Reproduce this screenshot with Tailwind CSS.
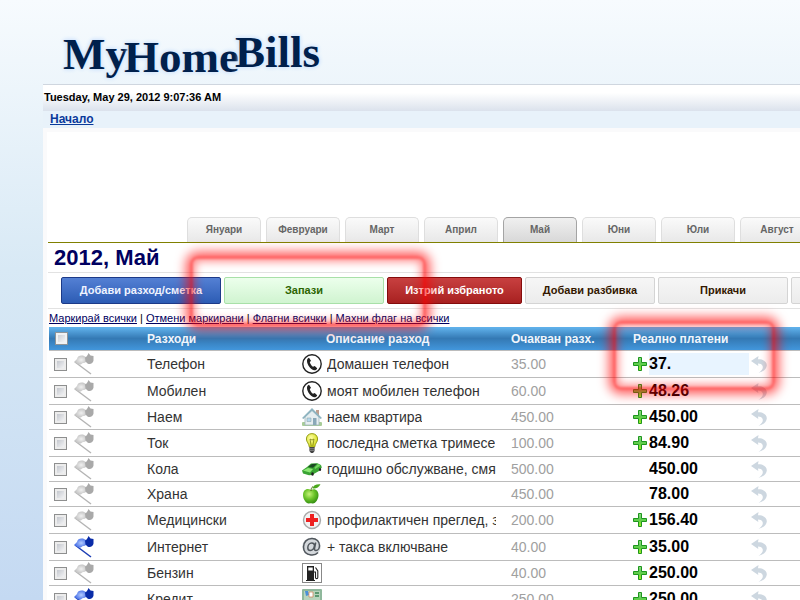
<!DOCTYPE html>
<html lang="bg">
<head>
<meta charset="utf-8">
<title>MyHomeBills</title>
<script src="https://cdn.jsdelivr.net/npm/@tailwindcss/browser@4"></script>
</head>
<body class="h-screen overflow-hidden bg-linear-to-b from-[#f7fbfe] via-[#d8e9f5] via-45% to-[#c4d9f2] font-['Liberation_Sans',Arial,sans-serif] text-black">
<svg class="absolute size-0" aria-hidden="true">
  <defs>
    <radialGradient id="gflag" cx=".6" cy=".5" r=".6"><stop offset="0" stop-color="#f0f0f0"/><stop offset="1" stop-color="#bcbcbc"/></radialGradient>
    <radialGradient id="bflag" cx=".6" cy=".5" r=".6"><stop offset="0" stop-color="#b4ccff"/><stop offset="1" stop-color="#3c66e4"/></radialGradient>
    <linearGradient id="gplus" x1="0" y1="0" x2="0" y2="1"><stop offset="0" stop-color="#8fd88a"/><stop offset=".5" stop-color="#5ccc4c"/><stop offset="1" stop-color="#a6ee1c"/></linearGradient>
    <radialGradient id="gapple" cx=".4" cy=".35" r=".7"><stop offset="0" stop-color="#c6f27a"/><stop offset=".5" stop-color="#6cc42a"/><stop offset="1" stop-color="#2f8a10"/></radialGradient>
    <radialGradient id="gbulb" cx=".4" cy=".35" r=".7"><stop offset="0" stop-color="#ffffa8"/><stop offset="1" stop-color="#d2dc10"/></radialGradient>
    <symbol id="flag-g" viewBox="0 0 20 22"><path d="M1 9 17 21" stroke="#b4b4b4" stroke-width="1.4" fill="none"/><path d="M0 9 3 6C3.500 3 6 2 9 2.500L12 4v5C10.500 10.500 8.500 9.500 7.500 11 6 12.500 3 11 0 9Z" fill="url(#gflag)"/><path d="M11 4.500C12.500 4 13.500 2.500 14.500 0L16.500 2.500 19.500 3V7.500C19 10.500 16 12 13.500 10.500L11.500 8.500Z" fill="#a9a9a9"/></symbol>
    <symbol id="flag-b" viewBox="0 0 20 22"><path d="M1 9 17 21" stroke="#1a3cb4" stroke-width="1.5" fill="none"/><path d="M0 9 3 6C3.500 3 6 2 9 2.500L12 4v5C10.500 10.500 8.500 9.500 7.500 11 6 12.500 3 11 0 9Z" fill="url(#bflag)"/><path d="M11 4.500C12.500 4 13.500 2.500 14.500 0L16.500 2.500 19.500 3V7.500C19 10.500 16 12 13.500 10.500L11.500 8.500Z" fill="#0a2ca8"/></symbol>
    <symbol id="plus" viewBox="0 0 14 14"><path d="M5.500 .5h3v5h5v3h-5v5h-3v-5h-5v-3h5Z" fill="url(#gplus)" stroke="#1d961d"/></symbol>
    <symbol id="undo" viewBox="0 0 16 17"><path d="M0 5 7.500 0 7 3.200C13 3 16 6 15.800 9.500 15.500 13 12.500 15.500 7.500 17 11 14.500 12.500 12 11.500 9.800 10.800 8.300 9.300 7.700 7 7.600L7.300 10Z" fill="#cdd7e0"/></symbol>
    <symbol id="phone" viewBox="0 0 20 20"><circle cx="10" cy="10" r="9.200" fill="#fff" stroke="#222" stroke-width="1.400"/><path d="M7 3.800 9 6.800 7.800 8.200C8.300 10 9.500 11.700 11 12.800L12.700 12 15.200 14.200C14.600 15.800 13.300 16.500 12 16.200 8.500 15.400 5.300 11 5 7.300 4.900 5.700 5.600 4.300 7 3.800Z" fill="#222"/></symbol>
    <symbol id="house" viewBox="0 0 20 20"><rect y="15" width="20" height="4" rx="1" fill="#a8cc98"/><path d="M14 3h3v6h-3Z" fill="#c0a090"/><path d="M3 9.500 10 3l7 6.500V18H3Z" fill="#e6eef0" stroke="#a0b4bc" stroke-width=".8"/><path d="M0 11 10 1l10 10-1.500 1L10 4 1.500 12Z" fill="#8fb4c0"/><path d="M11 11h3.500v7H11Z" fill="#8aa8b8"/><path d="M5 11h4v3.500H5Z" fill="#b4d8ec" stroke="#90a8b0" stroke-width=".6"/></symbol>
    <symbol id="bulb" viewBox="0 0 20 20"><path d="M10 .6c-3.500 0-5.600 2.400-5.600 5.400C4.400 9 7 10.500 7.300 14h5.400c.3-3.500 2.900-5 2.900-8C15.600 3 13.500.6 10 .6Z" fill="url(#gbulb)" stroke="#8c9410" stroke-width=".9"/><path d="M8 6l1.200 7M12 6l-1.200 7M8 6l2 1 2-1" stroke="#7c8010" stroke-width=".8" fill="none"/><path d="M7.400 14h5.200v4L11 20H9l-1.600-2Z" fill="#444"/><path d="M7.400 15.700h5.200M7.400 17.400h5.200" stroke="#aaa" stroke-width=".6"/></symbol>
    <symbol id="car" viewBox="0 0 20 20"><path d="M0 11.500 5 8l4-3.500 6.500-.3L19 6l.8 2.500L17 12l-7 4-3 .3L1 14.500Z" fill="#3aa434"/><path d="M6 8l4-3 5-.2-4 4Z" fill="#1c4a24"/><path d="M1 11.500 6 9l5 1L8 13.500Z" fill="#8ce874"/><path d="M12.500 8.600 16 5l2.500 1.700L13 10Z" fill="#74d860"/><ellipse cx="10.500" cy="15" rx="1.300" ry="1.700" fill="#222"/><ellipse cx="18" cy="10.500" rx="1.100" ry="1.600" fill="#222"/></symbol>
    <symbol id="apple" viewBox="0 0 20 20"><path d="M9 6C5 3.500 1 6 1 11c0 4.500 3.500 9 6 8.500 1.500-.3 2-.3 3.500 0 3 .5 6-4.500 6-8.500C16.500 6 12.500 3.800 9 6Z" fill="url(#gapple)"/><path d="M9 7C9 5 9.500 3.500 11 2.500" stroke="#4a6a10" fill="none"/><path d="M10.500 4.500C11 1.500 14 0 18.500.3 17 3.500 14 5 10.500 4.500Z" fill="#4aa81c"/></symbol>
    <symbol id="med" viewBox="0 0 20 20"><circle cx="10" cy="10" r="8.500" fill="#f2f2f2" stroke="#a8a8a8" stroke-width="1.400"/><path d="M8 4h4v4h4v4h-4v4H8v-4H4V8h4Z" fill="#ee2020"/></symbol>
    <symbol id="at" viewBox="0 0 20 20"><ellipse cx="9.500" cy="9.500" rx="9.300" ry="9" fill="#d4d8dc"/><path d="M16 15.500C14 17.800 11.500 18.300 9 18 4.500 17.500 1.500 14.500 1.500 10 1.500 5 5 1.500 10 1.500c4.500 0 7.500 3 7.500 7 0 3-1.700 5-3.500 5-1.500 0-1.700-1.200-1.300-3L13.700 5.500M12.500 8.500C12.300 7 11.300 6 9.800 6 7.500 6 5.800 8.300 5.800 10.700c0 1.700 1 2.800 2.500 2.800 1.900 0 3.700-2 4.200-5Z" fill="none" stroke="#50565c" stroke-width="1.500"/></symbol>
    <symbol id="fuel" viewBox="0 0 20 20"><rect x=".5" y=".5" width="19" height="19" fill="#fff" stroke="#888"/><path d="M5 3h7v14h1v1H4v-1h1Z" fill="#222"/><path d="M6.300 4.500h4.400v3H6.300Z" fill="#fff"/><path d="M12 9h1.500v5.500c0 1.500 2.300 1.500 2.300 0V8L13.500 4.500" stroke="#222" stroke-width="1.100" fill="none"/></symbol>
    <symbol id="money" viewBox="0 0 20 20"><rect y="0" width="20" height="14" rx="1" fill="#8fb89c"/><path d="M2 2h16v9H2Z" fill="#b8d4bc"/><path d="M3 2h3l1 4-3 1Z" fill="#4a90d8"/><path d="M7 3h4v5H7Z" fill="#fff" stroke="#d08050" stroke-width=".7"/><path d="M13 3h4v2h-4ZM13 6h4v2h-4Z" fill="#5c9870"/></symbol>
  </defs>
</svg>

<div class="relative h-full min-w-0 overflow-hidden">
  <div class="ml-[43px]">
    <header class="flex h-[84px] items-end pb-1 pl-5">
      <h1 class="flex items-end font-['Liberation_Serif',serif] text-[45px] leading-[46px] font-bold text-[#00204c] [text-shadow:0_0_3px_#d4e6fc,0_0_4px_#d4e6fc,0_0_5px_#d4e6fc]">
        <span class="pb-[3px]">My</span><span class="-ml-1">Home</span><span class="-ml-1 pb-[5px]">Bills</span>
      </h1>
    </header>
    <div class="h-[27px] border-t border-[#cfd6df] bg-linear-to-b from-white from-30% to-[#dbe2ec] pl-px text-[11px] leading-[25px] font-bold">Tuesday, May 29, 2012 9:07:36 AM</div>
    <nav class="h-[17px] bg-[#e8f2fa] pl-[7px] text-[12px] leading-4 font-bold"><a href="#" class="text-[#0a3a9a] underline">Начало</a></nav>

    <main class="bg-[#fafafb] pt-1 pl-1">
      <div class="h-screen bg-white pt-[85px] pl-px">
        <nav class="flex gap-[5px] overflow-hidden border-b border-[#808000] pl-[139px]" id="months"></nav>

        <h2 class="pl-[6px] text-[22px] leading-[29px] font-bold text-[#000060]">2012, Май</h2>
        <div class="flex gap-[3px] overflow-hidden border-y border-[#e2e2e2] py-1 pl-[13px] text-[11px] font-bold whitespace-nowrap">
          <button class="h-[27px] w-40 shrink-0 rounded-xs border border-[#1c3a88] bg-linear-to-b from-[#5480d4] to-[#2c5cb4] text-[#f0f4ff]">Добави разход/сметка</button>
          <button class="h-[27px] w-40 shrink-0 rounded-xs border border-[#a8e0a8] bg-linear-to-b from-[#ecffec] to-[#d0f4d0] text-[#2c6400]">Запази</button>
          <button class="h-[27px] w-[135px] shrink-0 rounded-xs border border-[#840c0c] bg-linear-to-b from-[#c84040] to-[#a82020] text-white">Изтрий избраното</button>
          <button class="h-[27px] w-[130px] shrink-0 rounded-xs border border-[#d4d4d4] bg-linear-to-b from-[#f6f6f6] to-[#ececec] text-[#331800]">Добави разбивка</button>
          <button class="h-[27px] w-[130px] shrink-0 rounded-xs border border-[#d4d4d4] bg-linear-to-b from-[#f6f6f6] to-[#ececec] text-[#331800]">Прикачи</button>
          <button class="h-[27px] w-[130px] shrink-0 rounded-xs border border-[#d4d4d4] bg-linear-to-b from-[#f6f6f6] to-[#ececec] text-[#331800]" aria-label="Още"></button>
        </div>
        <div class="pl-px text-[11px] leading-[18px] whitespace-nowrap text-[#000060]"><a href="#" class="underline">Маркирай всички</a> <span class="text-black">|</span> <a href="#" class="underline">Отмени маркирани</a> <span class="text-black">|</span> <a href="#" class="underline">Флагни всички</a> <span class="text-black">|</span> <a href="#" class="underline">Махни флаг на всички</a></div>

        <table class="w-full table-fixed border-separate border-spacing-0 pl-px text-left">
          <colgroup><col class="w-[25px]"><col class="w-[73px]"><col class="w-[155px]"><col class="w-[209px]"><col class="w-[122px]"><col></colgroup>
          <thead>
            <tr class="h-[23px] bg-linear-to-b from-[#5fb0ea] from-4% via-[#3479b4] via-50% to-[#4296dc] text-[12px] text-[#f0f6fc]">
              <th class="p-0 pl-[6px]"><input type="checkbox" aria-label="Маркирай всички" class="block size-[13px] appearance-none border border-[#8e9498] bg-linear-to-br from-[#c0c6ce] to-white shadow-[inset_0_0_0_2px_#f0f2f4]"></th>
              <th class="p-0"></th>
              <th class="p-0 leading-4">Разходи</th><th class="p-0 pl-6 leading-4">Описание разход</th><th class="p-0 leading-4">Очакван разх.</th><th class="p-0 leading-4">Реално платени</th>
            </tr>
          </thead>
          <tbody id="bills"></tbody>
        </table>
      </div>
    </main>
  </div>

  <div class="pointer-events-none absolute top-[256px] left-[190px] h-[70px] w-[236px] rounded-[8px] border-[3px] border-[#ff0000]/60 shadow-[0_0_11px_4px_rgba(255,0,0,0.65),inset_0_0_8px_2px_rgba(255,0,0,0.5)] blur-[1px]"></div>
  <div class="pointer-events-none absolute top-[321px] left-[613px] h-[69px] w-[162px] rounded-[8px] border-[3px] border-[#ff0000]/60 shadow-[0_0_11px_4px_rgba(255,0,0,0.65),inset_0_0_8px_2px_rgba(255,0,0,0.5)] blur-[1px]"></div>
</div>

<script>
const months = ['Януари', 'Февруари', 'Март', 'Април', 'Май', 'Юни', 'Юли', 'Август'];
document.getElementById('months').innerHTML = months.map(m => m === 'Май'
  ? `<a href="#" class="h-[25px] w-[74px] shrink-0 rounded-t-[5px] border border-b-0 border-[#a4a4a4] bg-linear-to-b from-[#f0f0f0] to-[#d8d8d8] text-center text-[10px] leading-6 font-bold text-[#666]">${m}</a>`
  : `<a href="#" class="h-[25px] w-[74px] shrink-0 rounded-t-[5px] border border-b-0 border-[#dedede] bg-linear-to-b from-[#fafafa] to-[#e8e8e8] text-center text-[10px] leading-6 font-bold text-[#666]">${m}</a>`).join('');

// name, icon, description, expected, paid, has plus, flag, tall row
const bills = [
  ['Телефон', 'phone', 'Домашен телефон', '35.00', '37.', 1, 'g', 1],
  ['Мобилен', 'phone', 'моят мобилен телефон', '60.00', '48.26', 1, 'g', 1],
  ['Наем', 'house', 'наем квартира', '450.00', '450.00', 1, 'g', 0],
  ['Ток', 'bulb', 'последна сметка тримесе', '100.00', '84.90', 1, 'g', 1],
  ['Кола', 'car', 'годишно обслужване, смя', '500.00', '450.00', 0, 'g', 0],
  ['Храна', 'apple', '', '450.00', '78.00', 0, 'g', 0],
  ['Медицински', 'med', 'профилактичен преглед, з', '200.00', '156.40', 1, 'g', 1],
  ['Интернет', 'at', '+ такса включване', '40.00', '35.00', 1, 'b', 1],
  ['Бензин', 'fuel', '', '40.00', '250.00', 1, 'g', 0],
  ['Кредит', 'money', '', '250.00', '250.00', 1, 'b', 1]
];
document.getElementById('bills').innerHTML = bills.map(([name, icon, desc, exp, paid, plus, flag, tall], i) => `
<tr class="${tall ? 'h-[27px]' : 'h-[25px]'} text-[14px] leading-5 whitespace-nowrap text-[#333]">
  <td class="border-t border-[#bcbcbc] p-0 pl-[5px]"><input type="checkbox" aria-label="${name}" class="block size-[13px] appearance-none border border-[#8e8f8f] bg-linear-to-br from-[#b8bcc4] to-white shadow-[inset_0_0_0_2px_#ececec]"></td>
  <td class="border-t border-[#bcbcbc] p-0"><svg class="block h-[22px] w-5" aria-hidden="true"><use href="#flag-${flag}"/></svg></td>
  <td class="border-t border-[#bcbcbc] p-0">${name}</td>
  <td class="border-t border-[#bcbcbc] p-0"><div class="flex w-[194px] items-center gap-[5px] overflow-hidden"><svg class="size-5 shrink-0" aria-hidden="true"><use href="#${icon}"/></svg><span class="min-w-0 overflow-hidden">${desc}</span></div></td>
  <td class="border-t border-[#bcbcbc] p-0 text-[#a0a0a0]">${exp}</td>
  <td class="border-t border-[#bcbcbc] p-0"><div class="flex items-center gap-[2px]"><svg class="size-[14px] shrink-0 ${plus ? '' : 'invisible'}" aria-hidden="true"><use href="#plus"/></svg><input type="text" aria-label="Реално платени: ${name}" value="${paid}" class="${i === 0 ? 'bg-[#e8f4ff]' : 'bg-transparent'} h-[22px] w-[100px] text-[16px] font-bold text-black"><button class="h-[22px]" aria-label="Върни"><svg class="block h-[17px] w-4" aria-hidden="true"><use href="#undo"/></svg></button></div></td>
</tr>`).join('');
</script>
</body>
</html>
